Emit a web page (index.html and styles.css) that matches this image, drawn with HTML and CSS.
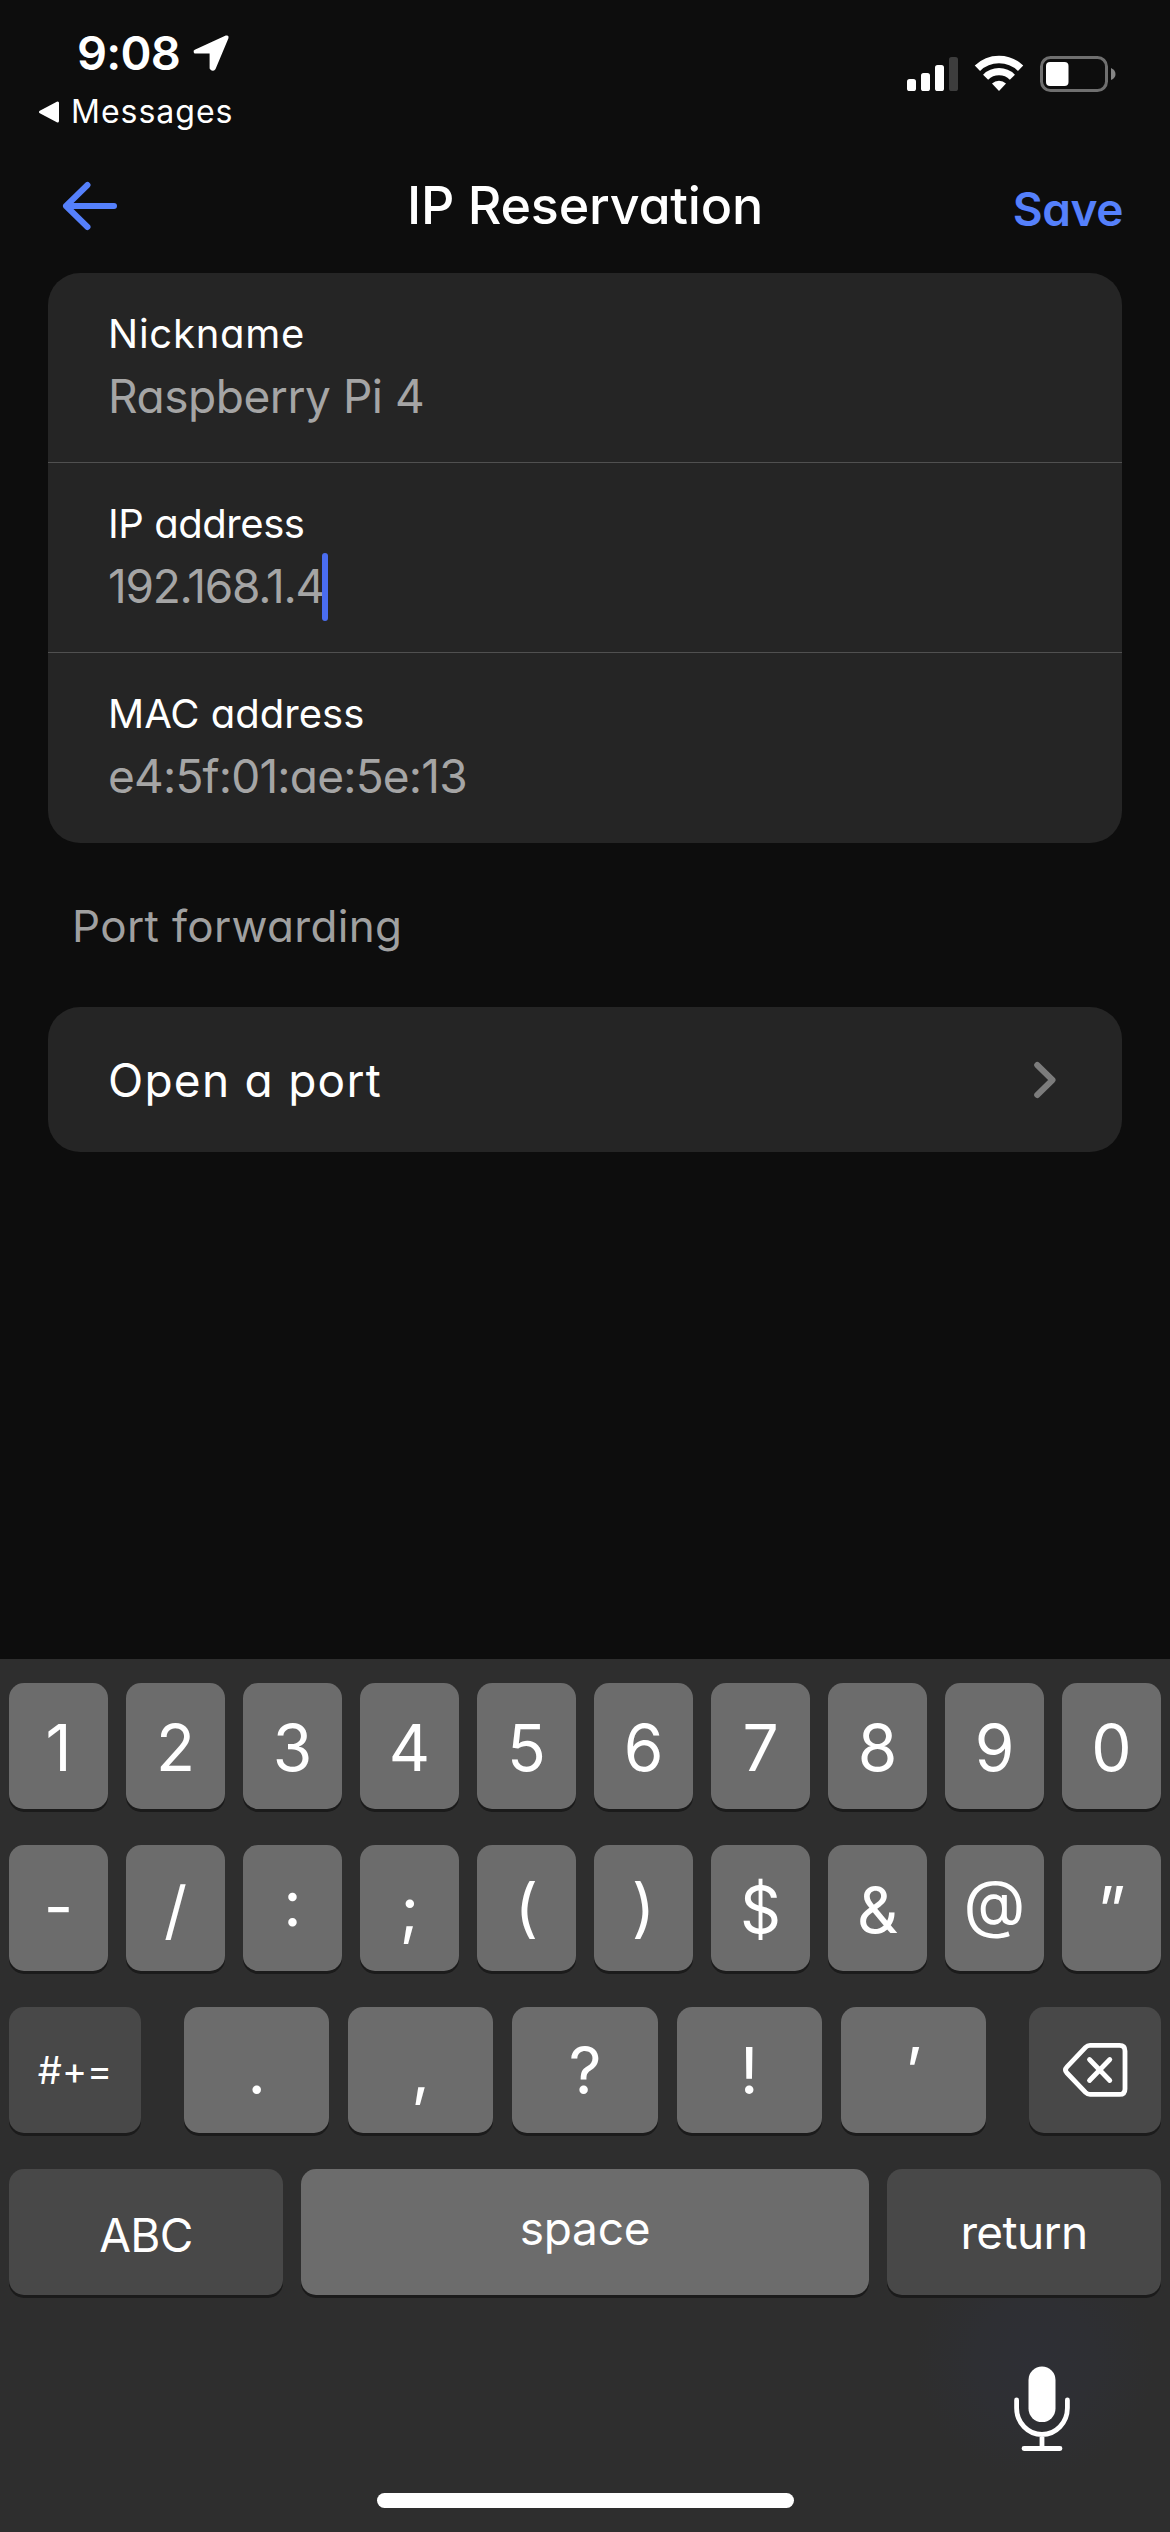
FILE: index.html
```html
<!DOCTYPE html>
<html lang="en">
<head>
<meta charset="utf-8">
<title>IP Reservation</title>
<link rel="stylesheet" href="styles.css">
</head>
<body>
<div class="screen">
  <header class="status">
    <div class="status-left">
      <div class="clock"><span class="time">9:08</span>
        <svg class="locate" width="38" height="38" viewBox="0 0 38 38"><path d="M34.6 3.4 L3.6 17.6 H19.6 V34 Q20.6 35.6 21.8 34 Z" fill="#fff" stroke="#fff" stroke-width="4" stroke-linejoin="round"/></svg>
      </div>
      <div class="crumb">
        <svg width="22" height="24" viewBox="0 0 22 24"><path d="M2.5 12 L19.5 3 V21 Z" fill="#fff" stroke="#fff" stroke-width="3" stroke-linejoin="round"/></svg>
        <span class="messages">Messages</span>
      </div>
    </div>
    <div class="status-right">
      <svg width="210" height="40" viewBox="906 54 210 40">
        <g fill="#fff"><rect x="907" y="79" width="9" height="12" rx="2.6"/><rect x="921" y="73" width="9" height="18" rx="2.6"/><rect x="935" y="65" width="9" height="26" rx="2.6"/></g>
        <rect x="949" y="57" width="9" height="34" rx="2.6" fill="#3d3d3d"/>
        <g fill="none" stroke="#fff"><path d="M977.4 68.2 A31 31 0 0 1 1020.6 68.2" stroke-width="7.6"/><path d="M985.6 77.2 A19 19 0 0 1 1012.4 77.2" stroke-width="7.2"/></g>
        <path d="M999 91 L992 83.6 A10.2 10.2 0 0 1 1006 83.6 Z" fill="#fff"/>
        <rect x="1041.5" y="57.5" width="65" height="33" rx="9" fill="none" stroke="#6f6f6f" stroke-width="3"/>
        <rect x="1046" y="62" width="22.5" height="24" rx="4" fill="#fff"/>
        <path d="M1111 68 Q1115.5 70 1115.5 74 T1111 80 Z" fill="#858585"/>
      </svg>
    </div>
  </header>

  <nav class="nav">
    <svg class="back" width="56" height="50" viewBox="0 0 56 50"><path d="M26.5 4 L5 25 L26.5 46 M5 25 H53" fill="none" stroke="#5580fb" stroke-width="6" stroke-linecap="round" stroke-linejoin="round"/></svg>
    <h1 class="geo">IP Reservation</h1>
    <a class="geo">Save</a>
  </nav>

  <main>
    <section class="card geo">
      <div class="field"><div class="label nickname">Nickname</div><div class="value device">Raspberry Pi 4</div></div>
      <div class="field"><div class="label ip">IP address</div><div class="value ip-value">192.168.1.4<i class="caret"></i></div></div>
      <div class="field"><div class="label">MAC address</div><div class="value mac-value">e4:5f:01:ae:5e:13</div></div>
    </section>
    <h2 class="geo">Port forwarding</h2>
    <section class="card link geo">
      <span>Open a port</span>
      <svg width="24" height="38" viewBox="0 0 24 38"><path d="M4.2 4 L19.5 19 L4.2 34" fill="none" stroke="#7c7c7c" stroke-width="6" stroke-linecap="round" stroke-linejoin="round"/></svg>
    </section>
  </main>

  <footer class="keyboard">
    <div class="row ten"><b>1</b><b>2</b><b>3</b><b>4</b><b>5</b><b>6</b><b>7</b><b>8</b><b>9</b><b>0</b></div>
    <div class="row ten symbols"><b>-</b><b>/</b><b>:</b><b>;</b><b>(</b><b>)</b><b>$</b><b>&amp;</b><b>@</b><b>”</b></div>
    <div class="row marks">
      <b class="dark more">#+=</b>
      <div class="five"><b>.</b><b>,</b><b>?</b><b>!</b><b>’</b></div>
      <b class="dark del"><svg width="66" height="56" viewBox="0 0 66 56"><g fill="none" stroke="#fff" stroke-width="4.8" stroke-linecap="round" stroke-linejoin="round"><path d="M28 3.4 H57.5 Q63 3.4 63 8.9 V46.9 Q63 52.4 57.5 52.4 H28 Q25.5 52.4 23.5 50.4 L5 31 Q2 27.9 5 24.8 L23.5 5.4 Q25.5 3.4 28 3.4 Z"/><path d="M27.5 17.5 L47.8 38.5 M47.8 17.5 L27.5 38.5"/></g></svg></b>
    </div>
    <div class="row bottom"><b class="dark abc">ABC</b><b class="space">space</b><b class="dark return">return</b></div>
    <div class="dock">
      <svg class="mic" width="60" height="88" viewBox="0 0 60 88"><rect x="16.5" y="1.6" width="27" height="55.5" rx="13.5" fill="#fff"/><g fill="none" stroke="#fff" stroke-width="4.8" stroke-linecap="round"><path d="M4.6 35 V43 A25.4 26.5 0 0 0 55.4 43 V35 M30 69.5 V83.5 M12 83.5 H48"/></g></svg>
      <div class="home"></div>
    </div>
  </footer>
</div>
</body>
</html>
```
FILE: styles.css
```css
* { box-sizing: border-box; margin: 0; padding: 0; }
body { background: #0d0d0d; color: #fff; font-family: Inter, "Liberation Sans", sans-serif; }
svg { display: block; flex: none; }
.screen { width: 1170px; height: 2532px; display: flex; flex-direction: column; overflow: hidden; }
.geo { font-feature-settings: "cv11", "ss03"; }

.status { height: 146px; display: flex; justify-content: space-between; flex: none; }
.status-left { padding: 22px 0 0 38px; }
.clock { height: 61px; padding-left: 39px; display: flex; align-items: center; gap: 12px; }
.time { font-size: 47px; font-weight: 600; line-height: 61px; letter-spacing: -0.8px; }
.crumb { height: 57px; display: flex; align-items: center; gap: 11px; }
.messages { font-size: 32px; font-weight: 400; line-height: 57px; letter-spacing: 1px; }
.status-right { padding: 54px 54px 0 0; }

.nav { height: 120px; margin-bottom: 7px; flex: none; display: grid; grid-template-columns: 1fr auto 1fr; align-items: center; padding: 0 47px; }
.back { margin-left: 14px; }
.nav h1 { font-size: 52px; font-weight: 500; line-height: 120px; letter-spacing: -0.2px; }
.nav a { justify-self: end; color: #5580fb; font-size: 46px; font-weight: 600; padding-top: 5px; letter-spacing: -0.4px; }

main { flex: 1; padding: 0 48px; min-height: 0; }
.card { background: #252525; border-radius: 32px; overflow: hidden; }
.field { height: 190px; padding: 36px 60px 29px; border-bottom: 1px solid #505050; }
.field:last-child { border-bottom: 0; }
.label { font-size: 40px; line-height: 50px; height: 50px; }
.nickname { letter-spacing: 0.75px; }
.ip { letter-spacing: -0.45px; }
.value { font-size: 46px; line-height: 75px; height: 75px; color: #a5a5a5; display: flex; align-items: center; }
.device { letter-spacing: -0.45px; }
.ip-value { letter-spacing: -1.3px; }
.mac-value { letter-spacing: -0.8px; }
.caret { width: 6px; height: 68px; margin: 0 0 0 -2px; border-radius: 3px; background: #4a6df0; }
h2 { height: 164px; padding: 2px 24px 0; color: #a0a0a0; font-size: 44px; font-weight: 400; line-height: 162px; letter-spacing: 0.35px; }
.link { height: 145px; padding: 0 65px 0 60px; display: flex; justify-content: space-between; align-items: center; font-size: 46px; letter-spacing: 1.25px; }

.keyboard { height: 873px; flex: none; padding: 24px 9px 0; background: radial-gradient(circle at 1035px 700px, #2e2f35 0, #2e2f33 60px, #2e2e2e 120px) #2e2e2e; display: flex; flex-direction: column; gap: 36px; }
.row { height: 126px; display: grid; gap: 18px; flex: none; }
.row b { height: 126px; display: flex; align-items: center; justify-content: center; background: #6c6c6c; border-radius: 15px; box-shadow: 0 3px 0 #1b1b1b; font-size: 64px; font-weight: 400; line-height: 80px; padding-top: 3px; }
.row b.dark { background: #484848; }
.ten { grid-template-columns: repeat(10, 1fr); }
.symbols { font-feature-settings: "case"; }
.marks { grid-template-columns: 132px 1fr 132px; gap: 43px; }
.five { display: grid; grid-template-columns: repeat(5, 1fr); gap: 19px; }
.five b { padding-top: 1px; }
.bottom { grid-template-columns: 274px 1fr 274px; }
.row b.more { font-size: 38px; padding-top: 0; }
.row b.del { padding: 0; }
.row b.abc { font-size: 46px; padding-top: 6px; letter-spacing: -0.6px; }
.row b.space { font-size: 46px; padding: 0 0 8px; letter-spacing: -0.3px; }
.row b.return { font-size: 46px; padding: 0; letter-spacing: -0.6px; }
.dock { flex: 1; display: flex; flex-direction: column; align-items: center; justify-content: space-between; padding: 34px 0 24px; }
.mic { align-self: flex-end; margin-right: 89px; }
.home { width: 417px; height: 15px; border-radius: 8px; background: #fff; }
```
